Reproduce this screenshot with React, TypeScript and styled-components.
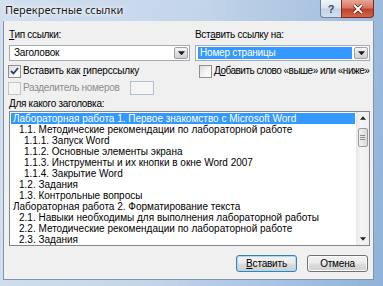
import styled, {createGlobalStyle, css} from 'styled-components';

const UI_FONT = `"Liberation Sans", "DejaVu Sans", sans-serif`;

const GlobalStyle = createGlobalStyle`
   html, body {
      margin: 0;
      padding: 0;
   }
   body {
      width: 383px;
      height: 286px;
      overflow: hidden;
      background: #b7cde6;
   }
`;

const HEADINGS: {text: string; level: number}[] = [
   {text: 'Лабораторная работа 1. Первое знакомство с Microsoft Word', level: 0},
   {text: '1.1. Методические рекомендации по лабораторной работе', level: 1},
   {text: '1.1.1. Запуск Word', level: 2},
   {text: '1.1.2. Основные элементы экрана', level: 2},
   {text: '1.1.3. Инструменты и их кнопки в окне Word 2007', level: 2},
   {text: '1.1.4. Закрытие Word', level: 2},
   {text: '1.2. Задания', level: 1},
   {text: '1.3. Контрольные вопросы', level: 1},
   {text: 'Лабораторная работа 2. Форматирование текста', level: 0},
   {text: '2.1. Навыки необходимы для выполнения лабораторной работы', level: 1},
   {text: '2.2. Методические рекомендации по лабораторной работе', level: 1},
   {text: '2.3. Задания', level: 1},
];

const INDENT = [2, 8, 13];

const Window = styled.div`
   width: 383px;
   height: 286px;
   box-sizing: border-box;
   display: flex;
   flex-direction: column;
   padding: 0 9px 6px 3px;
   background: linear-gradient(100deg, #d3e0ee 0%, #c4d6ea 45%, #a9c3e0 75%, #8fb2d8 100%);
   font-family: ${UI_FONT};
`;

const TitleBar = styled.div`
   height: 21px;
   display: flex;
   align-items: flex-start;
   justify-content: space-between;
   margin-left: -3px;
`;

const Title = styled.div`
   padding-left: 5px;
   line-height: 20px;
   font-size: 11px;
   font-family: "Noto Sans", ${UI_FONT};
   color: #1a1a1a;
   text-shadow: 0 0 6px #fff, 0 0 3px #fff;
`;

const CaptionButtons = styled.div`
   display: flex;
`;

const CaptionButton = styled.div<{$close?: boolean}>`
   height: 18px;
   box-sizing: border-box;
   display: flex;
   align-items: center;
   justify-content: center;
   border: 1px solid #6d7f99;
   border-top: none;
   ${props =>
      props.$close
         ? css`
              width: 33px;
              border-color: #7a2a1e;
              border-radius: 0 0 4px 0;
              background: linear-gradient(#e8a596 0%, #d77763 45%, #c2402a 55%, #d2664a 100%);
           `
         : css`
              width: 21px;
              border-right: none;
              border-radius: 0 0 0 4px;
              background: linear-gradient(#eef3f9 0%, #dbe5f1 45%, #c3d2e5 55%, #d3e0ee 100%);
              color: #3b4b63;
              font-size: 11px;
              font-weight: bold;
              font-family: ${UI_FONT};
           `}
`;

const Content = styled.div`
   flex: 1;
   display: flex;
   flex-direction: column;
   background: #f0f0f0;
   border: 1px solid #7f93ad;
   border-top: none;
   padding: 8px 3px 0 5px;
   font-size: 10px;
   color: #000;
`;

const Columns = styled.div`
   display: grid;
   grid-template-columns: 181px 175px;
   column-gap: 5px;
`;

const Column = styled.div`
   display: flex;
   flex-direction: column;
`;

const Label = styled.div<{$disabled?: boolean; $spacing?: number}>`
   line-height: 12px;
   height: 12px;
   white-space: nowrap;
   letter-spacing: ${props => props.$spacing ?? -0.3}px;
   color: ${props => (props.$disabled ? '#8d8d8d' : '#000')};
`;

const Combo = styled.div`
   margin-top: 4px;
   height: 16px;
   box-sizing: border-box;
   display: flex;
   align-items: stretch;
   background: #fff;
   border: 1px solid #a6abb3;
   padding: 1px;
`;

const ComboText = styled.div<{$selected?: boolean}>`
   flex: 1;
   display: flex;
   align-items: center;
   padding-left: 2px;
   margin: 0 2px 0 1px;
   line-height: 12px;
   letter-spacing: -0.2px;
   ${props =>
      props.$selected &&
      css`
         background: #3399ff;
         color: #fff;
      `}
`;

const ComboArrow = styled.div`
   width: 14px;
   display: flex;
   align-items: center;
   justify-content: center;
   border: 1px solid #9ea3aa;
   border-radius: 2px;
   box-sizing: border-box;
   background: linear-gradient(#f5f5f5, #e1e1e1 50%, #cfcfcf);
`;

const CheckRow = styled.div<{$indent?: number}>`
   margin-top: 3px;
   height: 14px;
   display: flex;
   align-items: center;
   margin-left: ${props => props.$indent ?? 0}px;
`;

const CheckBox = styled.div<{$disabled?: boolean}>`
   width: 13px;
   height: 13px;
   box-sizing: border-box;
   margin-right: 2px;
   flex-shrink: 0;
   display: flex;
   align-items: center;
   justify-content: center;
   border: 1px solid ${props => (props.$disabled ? '#c5c5c5' : '#8e8f8f')};
   background: ${props =>
      props.$disabled
         ? '#f4f4f4'
         : 'linear-gradient(135deg, #dcdcdc, #f6f6f6 60%, #ffffff)'};
`;

const SmallInput = styled.div`
   width: 24px;
   height: 14px;
   box-sizing: border-box;
   margin-left: 11px;
   border: 1px solid #b3c0d0;
   background: #f4f4f4;
`;

const ListLabel = styled(Label)`
   margin-top: 3px;
`;

const ListBox = styled.div`
   margin-top: 1px;
   height: 135px;
   box-sizing: border-box;
   border: 1px solid #828790;
   background: #fff;
   display: flex;
   overflow: hidden;
`;

const Items = styled.div`
   flex: 1;
   padding: 1px 1px 0 1px;
   overflow: hidden;
`;

const Item = styled.div<{$level: number; $selected?: boolean}>`
   height: 11px;
   line-height: 11px;
   white-space: nowrap;
   padding-left: ${props => INDENT[props.$level]}px;
   ${props =>
      props.$selected &&
      css`
         background: #3399ff;
         color: #fff;
      `}
`;

const ScrollBar = styled.div`
   width: 13px;
   display: flex;
   flex-direction: column;
   align-items: center;
   background: linear-gradient(90deg, #e9e9e9, #f5f5f5 40%, #eeeeee);
`;

const ScrollArrow = styled.div`
   height: 12px;
   width: 100%;
   display: flex;
   align-items: center;
   justify-content: center;
`;

const Thumb = styled.div`
   margin-top: 4px;
   width: 10px;
   height: 19px;
   box-sizing: border-box;
   border: 1px solid #9b9b9b;
   border-radius: 2px;
   background: linear-gradient(90deg, #f1f1f1, #e6e6e6 50%, #d8d8d8);
   display: flex;
   flex-direction: column;
   align-items: center;
   justify-content: center;
   gap: 1px;
`;

const Grip = styled.div`
   width: 5px;
   height: 1px;
   background: #8a8a8a;
`;

const Track = styled.div`
   flex: 1;
`;

const Footer = styled.div`
   margin-top: 9px;
   display: flex;
   justify-content: flex-end;
   gap: 10px;
   padding-right: 2px;
`;

const Button = styled.div<{$default?: boolean}>`
   width: 61px;
   height: 17px;
   box-sizing: border-box;
   display: flex;
   align-items: center;
   justify-content: center;
   border-radius: 3px;
   letter-spacing: -0.2px;
   border: 1px solid ${props => (props.$default ? '#3c7fb1' : '#707070')};
   background: linear-gradient(#f2f2f2 0%, #ebebeb 49%, #dddddd 51%, #cfcfcf 100%);
   box-shadow: ${props =>
      props.$default ? 'inset 0 0 0 1px #a8dcf6' : 'inset 0 0 0 1px #fcfcfc'};
`;

const Arrow = ({up, size = 7}: {up?: boolean; size?: number}) => (
   <svg width={size} height={size / 2 + 1} viewBox='0 0 7 4'>
      <path d={up ? 'M0 4 L3.5 0 L7 4 Z' : 'M0 0 L3.5 4 L7 0 Z'} fill='#1e1e1e' />
   </svg>
);

const Tick = () => (
   <svg width='9' height='8' viewBox='0 0 9 8'>
      <path
         d='M1 4 L3.5 6.5 L8 1'
         fill='none'
         stroke='#2a3b75'
         strokeWidth='1.8'
      />
   </svg>
);

const CloseGlyph = () => (
   <svg width='12' height='10' viewBox='0 0 12 10'>
      <path d='M2 1 L10 9 M10 1 L2 9' stroke='#5a1d14' strokeWidth='3.4' />
      <path d='M2 1 L10 9 M10 1 L2 9' stroke='#fff' strokeWidth='2' />
   </svg>
);

const App = () => (
   <>
      <GlobalStyle />
      <Window>
         <TitleBar>
            <Title>Перекрестные ссылки</Title>
            <CaptionButtons>
               <CaptionButton>?</CaptionButton>
               <CaptionButton $close>
                  <CloseGlyph />
               </CaptionButton>
            </CaptionButtons>
         </TitleBar>
         <Content>
            <Columns>
               <Column>
                  <Label>
                     <u>Т</u>ип ссылки:
                  </Label>
                  <Combo>
                     <ComboText>Заголовок</ComboText>
                     <ComboArrow>
                        <Arrow />
                     </ComboArrow>
                  </Combo>
                  <CheckRow $indent={-1}>
                     <CheckBox>
                        <Tick />
                     </CheckBox>
                     <Label $spacing={-0.2}>
                        Вставить как <u>г</u>иперссылку
                     </Label>
                  </CheckRow>
                  <CheckRow $indent={-1}>
                     <CheckBox $disabled />
                     <Label $disabled>Разделитель номеров</Label>
                     <SmallInput />
                  </CheckRow>
               </Column>
               <Column>
                  <Label>
                     Вст<u>а</u>вить ссылку на:
                  </Label>
                  <Combo>
                     <ComboText $selected>Номер страницы</ComboText>
                     <ComboArrow>
                        <Arrow />
                     </ComboArrow>
                  </Combo>
                  <CheckRow $indent={4}>
                     <CheckBox />
                     <Label $spacing={-0.5}>
                        Д<u>о</u>бавить слово «выше» или «ниже»
                     </Label>
                  </CheckRow>
               </Column>
            </Columns>
            <ListLabel>
               <u>Д</u>ля какого заголовка:
            </ListLabel>
            <ListBox>
               <Items>
                  {HEADINGS.map((item, i) => (
                     <Item key={item.text} $level={item.level} $selected={i === 0}>
                        {item.text}
                     </Item>
                  ))}
               </Items>
               <ScrollBar>
                  <ScrollArrow>
                     <Arrow up size={6} />
                  </ScrollArrow>
                  <Thumb>
                     <Grip />
                     <Grip />
                     <Grip />
                  </Thumb>
                  <Track />
                  <ScrollArrow>
                     <Arrow size={6} />
                  </ScrollArrow>
               </ScrollBar>
            </ListBox>
            <Footer>
               <Button $default>
                  <span>
                     <u>В</u>ставить
                  </span>
               </Button>
               <Button>Отмена</Button>
            </Footer>
         </Content>
      </Window>
   </>
);

export default App;
